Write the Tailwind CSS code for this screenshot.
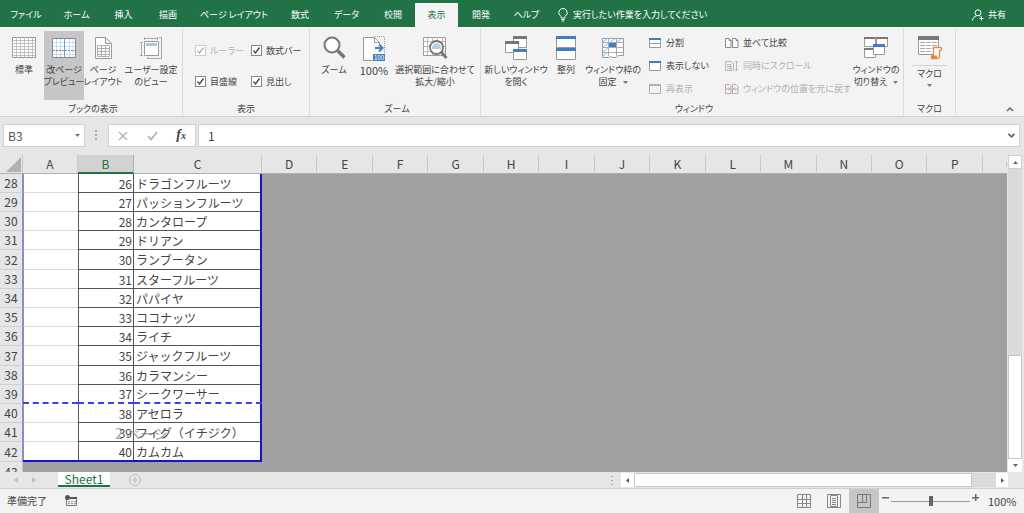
<!DOCTYPE html>
<html lang="ja">
<head>
<meta charset="utf-8">
<title>Sheet1</title>
<script src="https://cdn.jsdelivr.net/npm/@tailwindcss/browser@4"></script>
</head>
<body class="flex h-screen flex-col overflow-hidden bg-[#e6e6e6] font-['Noto_Sans_CJK_JP',sans-serif] text-[10px] leading-3 text-[#444] [font-feature-settings:'palt']">

<!-- Tabs -->
<nav class="flex h-[27px] shrink-0 items-end bg-[#217346] text-[9px] text-white whitespace-nowrap">
  <button class="h-6 w-[52px]">ファイル</button>
  <button class="h-6 w-[49px]">ホーム</button>
  <button class="h-6 w-[45px]">挿入</button>
  <button class="h-6 w-11">描画</button>
  <button class="h-6 w-[88px]">ページ レイアウト</button>
  <button class="h-6 w-11">数式</button>
  <button class="h-6 w-[49px]">データ</button>
  <button class="h-6 w-11">校閲</button>
  <button class="h-6 w-[43px] bg-[#f3f3f3] text-[#217346]">表示</button>
  <button class="h-6 w-[46px]">開発</button>
  <button class="h-6 w-[45px]">ヘルプ</button>
  <button class="ml-2 flex h-6 items-center gap-1">
    <svg width="12" height="14" viewBox="0 0 12 14" fill="none" stroke="#fff"><path d="M4.2 10V8.600C3 7.500 1.800 6.600 1.800 4.700a4.200 4.200 0 0 1 8.400 0C10.200 6.600 9 7.500 7.800 8.600V10zM4.200 11.500h3.600M4.800 13h2.400"/></svg>
    実行したい作業を入力してください</button>
  <button class="mr-[18px] ml-auto flex h-6 items-center gap-1">
    <svg width="12" height="12" viewBox="0 0 12 12" fill="none" stroke="#fff"><circle cx="6" cy="3.800" r="3"/><path d="M.6 11.500C.8 9 2.500 7.300 4.500 6.800M7.500 6.800 8.500 7.500M9.500 7.500v4M7.500 9.500h4"/></svg>
    共有</button>
</nav>

<!-- Ribbon -->
<div class="flex h-[90px] shrink-0 border-b border-[#d2d2d2] bg-[#f3f3f3] pt-[2px] pb-[1px] text-center text-[9px] whitespace-nowrap">
  <section class="flex w-[183px] flex-col border-r border-[#dadada] pt-[2px] pl-1">
    <div class="flex h-[69px] shrink-0">
      <button class="flex w-10 flex-col items-center pt-[5px]">
        <svg class="mb-1" width="24" height="24" viewBox="0 0 24 24"><path fill="#fff" stroke="#999" d="M.5 1.500h23v20H.5z"/><path fill="none" stroke="#b5b5b5" stroke-width=".8" d="M4.500 1v21M8.500 1v21M12.500 1v21M16.500 1v21M20.500 1v21M0 4.500h24M0 7.500h24M0 10.500h24M0 13.500h24M0 16.500h24M0 19.500h24"/></svg>
        標準</button>
      <button class="flex w-10 flex-col items-center bg-[#c6c6c6] pt-[5px]">
        <svg class="mb-1" width="24" height="24" viewBox="0 0 24 24"><path fill="#fff" stroke="#888" d="M.5 2.500h23v19H.5z"/><path fill="none" stroke="#c5ddf3" d="M4.500 3v18M8.500 3v18M17.500 3v18M21 3v18M1 6.500h22M1 10.500h22M1 18.500h22"/><path fill="none" stroke="#6a9fd4" d="M12.500 3v18"/><path fill="none" stroke="#888" stroke-dasharray="2 1" d="M1 14.500h22"/></svg>
        改ページ<br>プレビュー</button>
      <button class="flex w-[38px] flex-col items-center pt-[5px]">
        <svg class="mb-1" width="24" height="24" viewBox="0 0 24 24"><path fill="#fff" stroke="#999" d="M4.500 1.500h10l6 6v15h-16zM14.500 1.500v6h6"/><path fill="none" stroke="#b0b0b0" d="M6.500 9.500h12v11h-12zM10.500 9v12M14.500 9v12M6 12.500h12M6 15.500h12M6 18.500h12"/></svg>
        ページ<br>レイアウト</button>
      <button class="flex w-[58px] flex-col items-center pt-[5px]">
        <svg class="mb-1" width="24" height="24" viewBox="0 0 24 24"><path fill="none" stroke="#aaa" d="M5 2.500h14M5.500 1v3M18.500 1v3M2.500 6v14M1 6.500h3M1 19.500h3M20 1.500h2.500v21h-14V21"/><path fill="#fff" stroke="#999" d="M5.500 5.500h14v14h-14z"/><path fill="#a9c9ea" d="M7 7h11v3H7z"/></svg>
        ユーザー設定<br>のビュー</button>
    </div>
    <h2 class="pt-[3px]">ブックの表示</h2>
  </section>

  <section class="flex w-[127px] flex-col border-r border-[#dadada] pt-[2px]">
    <div class="grid h-[69px] shrink-0 grid-cols-[56px_1fr] grid-rows-[31px_31px] pt-1 pl-3 text-left" id="checks"></div>
    <h2 class="pt-[3px]">表示</h2>
  </section>

  <section class="flex w-[171px] flex-col border-r border-[#dadada] pt-[2px] pl-1">
    <div class="flex h-[69px] shrink-0">
      <button class="flex w-10 flex-col items-center pt-[5px]">
        <svg class="mb-1" width="24" height="24" viewBox="0 0 24 24"><circle cx="10" cy="9" r="7.500" fill="#fff" stroke="#777" stroke-width="2"/><path stroke="#777" stroke-width="3.500" d="m15.500 14.500 7 7"/></svg>
        ズーム</button>
      <button class="flex w-10 flex-col items-center pt-[5px]">
        <svg class="mb-1" width="24" height="26" viewBox="0 0 24 26"><path fill="#fff" d="M2 1h11l5 5v17H2z"/><path fill="none" stroke="#999" d="M10 24.500H1.500V1.500h11l5 5v3M12.500 1.500v5h5"/><path fill="none" stroke="#999" stroke-dasharray="1 1" d="M13 .5h9.500v17"/><path fill="none" stroke="#3f7fbf" stroke-width="2" d="M13 12h7M17 8.500l3.500 3.500-3.500 3.500"/><path fill="#3f7fbf" d="M11 18h12v7H11z"/><text x="17" y="23.800" fill="#fff" font-size="6" text-anchor="middle">100</text></svg>
        <span class="-mt-[2px] text-[11px]">100%</span></button>
      <button class="flex w-[82px] flex-col items-center pt-[5px]">
        <svg class="mb-1" width="26" height="24" viewBox="0 0 26 24"><path fill="#fff" stroke="#999" d="M1.500 1.500h22v18h-22z"/><path fill="none" stroke="#bbb" d="M5.500 1v18M10.500 1v18M15.500 1v18M20.500 1v18M1 5.500h22M1 10.500h22M1 15.500h22"/><circle cx="14.500" cy="11.500" r="6.500" fill="#fff" stroke="#777" stroke-width="1.800"/><path fill="#b5d0ec" d="M10 13a5 5 0 0 1 4.500-6 5 5 0 0 1 4.500 6z"/><path stroke="#777" stroke-width="3" d="m19 16 5.500 6"/></svg>
        選択範囲に合わせて<br>拡大/縮小</button>
    </div>
    <h2 class="pt-[3px]">ズーム</h2>
  </section>

  <section class="flex w-[423px] flex-col border-r border-[#dadada] pt-[2px] pl-1">
    <div class="flex h-[69px] shrink-0">
      <button class="flex w-[62px] flex-col items-center pt-[5px]">
        <svg class="mb-1" width="24" height="24" viewBox="0 0 24 24" fill="#fff" stroke="#999"><path d="M9.500 1.500h13v10h-13z"/><path stroke="none" fill="#777" d="M9 0h14v3H9z"/><path d="M1.500 6.500h13v10h-13z"/><path stroke="none" fill="#777" d="M1 5h14v3H1z"/><path d="M9.500 14.500h13v9h-13z"/><path stroke="none" fill="#3f7fbf" d="M9 13h14v3H9z"/></svg>
        新しいウィンドウ<br>を開く</button>
      <button class="flex w-[38px] flex-col items-center pt-[5px]">
        <svg class="mb-1" width="20" height="24" viewBox="0 0 20 24" fill="#fff" stroke="#999"><path d="M.5 1.500h19v22H.5z"/><path stroke="none" fill="#3f7fbf" d="M0 0h20v3H0zM0 12h20v3H0z"/><path d="M0 11.500h20"/></svg>
        整列</button>
      <button class="flex w-[56px] flex-col items-center pt-[5px]">
        <svg class="mb-1" width="24" height="24" viewBox="0 0 24 24"><path fill="#fff" stroke="#999" d="M1.500 2.500h21v17h-5l-2 2h-4l-2-1-2 1h-6z"/><path fill="none" stroke="#aaa" d="M7.500 2v18M15.500 2v18M1 6.500h22M1 11.500h22M1 16.500h22"/><path fill="none" stroke="#8fbbe6" d="m2 6 5-4M2 11l13-9M2 16l6-5M16 6l6-4M2 20l5-4"/><path fill="#3f7fbf" d="M8 7h7v4H8z"/></svg>
        ウィンドウ枠の<br><span>固定 <svg class="ml-1 inline" width="5" height="3" viewBox="0 0 5 3"><path fill="#777" d="M0 0h5L2.500 3z"/></svg></span></button>
      <div class="ml-2 flex w-[76px] flex-col pt-[1px] text-left">
        <button class="flex h-[23px] items-center gap-[5px]"><svg width="12" height="12" viewBox="0 0 12 12"><path fill="#fff" stroke="#999" d="M.5 1.500h11v9H.5zM0 6.500h12"/><path fill="#3f7fbf" d="M0 1h12v2H0z"/></svg>分割</button>
        <button class="flex h-[23px] items-center gap-[5px]"><svg width="12" height="12" viewBox="0 0 12 12"><path fill="#fff" stroke="#999" d="M.5 1.500h11v9H.5z"/><path fill="#3f7fbf" d="M0 1h12v2H0z"/></svg>表示しない</button>
        <button disabled class="flex h-[23px] items-center gap-[5px] text-[#b1b1b1]"><svg width="12" height="12" viewBox="0 0 12 12"><path fill="#f3f3f3" stroke="#b1b1b1" d="M.5 1.500h11v9H.5z"/><path fill="#b1b1b1" d="M0 1h12v2H0z"/></svg>再表示</button>
      </div>
      <div class="flex w-[126px] flex-col pt-[1px] text-left">
        <button class="flex h-[23px] items-center gap-1"><svg class="shrink-0" width="14" height="12" viewBox="0 0 14 12" fill="#fff" stroke="#888"><path d="M.5 1.500H4l2 2v7H.5zM4 1.500v2h2M7.500 1.500H11l2 2v7H7.500zM11 1.500v2h2"/></svg>並べて比較</button>
        <button disabled class="flex h-[23px] items-center gap-1 text-[#b1b1b1]"><svg class="shrink-0" width="14" height="12" viewBox="0 0 14 12" fill="none" stroke="#c0b5be"><path d="M.5 1.500H6l2.500 2v7h-8zM2 4.500h4M2 6.500h5M2 8.500h5M5.500 4v6M11.500 1v10M10 2.500 11.500 1 13 2.500M10 9.500l1.500 1.500L13 9.500"/></svg>同時にスクロール</button>
        <button disabled class="flex h-[23px] items-center gap-1 text-[#b1b1b1]"><svg class="shrink-0" width="14" height="12" viewBox="0 0 14 12" fill="none" stroke="#bba9b7"><path d="M.5 1.500H4l2 2v7H.5zM7.500 1.500H11l2 2v7H7.500zM1 6h4M3.500 4.500 5 6 3.500 7.500M13 6H8.500M10 4.500 8.500 6 10 7.500"/></svg>ウィンドウの位置を元に戻す</button>
      </div>
      <button class="flex w-[50px] flex-col items-center pt-[5px]">
        <svg class="mb-1" width="24" height="24" viewBox="0 0 24 24" fill="#fff" stroke="#999"><path d="M.5 1.500h11v9H.5zM12.500 1.500h11v9h-11zM.5 12.500h11v9H.5z"/><path stroke="none" fill="#777" d="M0 1h11v2H0zM12 1h12v2H12zM0 12h11v2H0z"/><path d="M9.500 9.500h11v9h-11z"/><path stroke="none" fill="#3f7fbf" d="M9 8h12v3H9z"/></svg>
        ウィンドウの<br><span>切り替え <svg class="ml-1 inline" width="5" height="3" viewBox="0 0 5 3"><path fill="#777" d="M0 0h5L2.500 3z"/></svg></span></button>
    </div>
    <h2 class="pt-[3px]">ウィンドウ</h2>
  </section>

  <section class="flex w-[52px] flex-col border-r border-[#dadada] pt-[2px]">
    <button class="flex h-[69px] shrink-0 flex-col items-center pt-1">
      <svg width="26" height="26" viewBox="0 0 26 26"><path fill="#fff" stroke="#999" d="M1.500 1.500h20v18h-20z"/><path fill="#777" d="M1 1h21v4H1z"/><path stroke="#aaa" stroke-dasharray="5 1" d="M3 7.500h17M3 10.500h17M3 13.500h17M3 16.500h12"/><path fill="#fff" stroke="#e88a3c" stroke-width="1.300" d="M16.500 21v-8.500h7c1.500 0 1.500 3 0 3h-1V21c0 2-1 2.500-2.500 2.500h-5.500V21z"/><path fill="#e88a3c" d="M14 20.500h6v3.500h-6z"/></svg>
      <span class="mt-1 w-[35px] border-t border-[#d2d2d2] pt-[2px]">マクロ</span>
      <svg class="mt-1" width="5" height="3" viewBox="0 0 5 3"><path fill="#777" d="M0 0h5L2.500 3z"/></svg>
    </button>
    <h2 class="pt-[3px]">マクロ</h2>
  </section>
  <button class="mt-auto mr-[10px] mb-[3px] ml-auto" aria-label="リボンを折りたたむ"><svg width="8" height="6" viewBox="0 0 8 6"><path fill="none" stroke="#666" stroke-width="1.500" d="m1 5 3-3 3 3"/></svg></button>
</div>

<!-- Formula bar -->
<div class="flex h-[30px] shrink-0 items-end pr-1 pl-[3px] text-xs leading-4">
  <div class="flex h-[23px] w-[82px] items-center border border-[#d0d0d0] bg-white">
    <input aria-label="名前ボックス" value="B3" class="w-16 pl-1 text-[#555] outline-none">
    <button class="ml-auto pr-[4px]" aria-label="名前の一覧"><svg width="5" height="3" viewBox="0 0 5 3"><path fill="#777" d="M0 0h5L2.500 3z"/></svg></button>
  </div>
  <svg class="mx-[10px] mb-[6px]" width="3" height="11" viewBox="0 0 3 11"><path fill="#aaa" d="M0 0h2v2H0zM0 4h2v2H0zM0 8h2v2H0z"/></svg>
  <div class="flex h-[23px] w-[88px] items-center justify-between border border-[#d0d0d0] bg-white px-[9px]">
    <button aria-label="キャンセル"><svg width="10" height="10" viewBox="0 0 10 10"><path stroke="#b5b5b5" stroke-width="1.500" d="m1 1 8 8M9 1 1 9"/></svg></button>
    <button aria-label="入力"><svg width="11" height="10" viewBox="0 0 11 10"><path fill="none" stroke="#b5b5b5" stroke-width="1.800" d="m1 5 3 3.500L10 1"/></svg></button>
    <button aria-label="関数の挿入" class="font-['Liberation_Serif',serif] text-sm leading-4 font-bold italic">f<span class="text-[10px]">x</span></button>
  </div>
  <div class="ml-[2px] flex h-[23px] flex-1 items-center border border-[#d0d0d0] bg-white">
    <input aria-label="数式バー" value="1" class="min-w-0 flex-1 pl-[9px] text-[#444] outline-none">
    <button class="px-[4px]" aria-label="数式バーの展開"><svg width="7" height="5" viewBox="0 0 7 5"><path fill="none" stroke="#666" stroke-width="1.800" d="m.5 1 3 2.800 3-2.800"/></svg></button>
  </div>
</div>

<!-- Sheet -->
<main class="flex min-h-0 flex-1 pt-2 pr-[2px]">
  <div class="relative min-w-0 flex-1 overflow-hidden bg-[#a0a0a0]">
    <table class="w-full table-fixed border-separate border-spacing-0 text-xs leading-4 [font-feature-settings:normal]">
      <colgroup id="cols"></colgroup>
      <thead><tr id="heads"></tr></thead>
      <tbody id="rows"></tbody>
    </table>
    <div class="pointer-events-none absolute top-[270px] left-[115px] text-sm leading-4 text-[#777]/70">2 ページ</div>
  </div>
  <div class="ml-[1px] flex w-[14px] flex-col bg-[#dadada]">
    <button class="flex h-[14px] items-center justify-center border border-[#d0d0d0] bg-white" aria-label="上へ"><svg width="5" height="3" viewBox="0 0 5 3"><path fill="#666" d="M0 3h5L2.500 0z"/></svg></button>
    <div class="mt-auto h-[104px] border border-[#c6c6c6] bg-white"></div>
    <button class="flex h-[13px] items-center justify-center bg-white" aria-label="下へ"><svg width="5" height="3" viewBox="0 0 5 3"><path fill="#666" d="M0 0h5L2.500 3z"/></svg></button>
  </div>
</main>

<!-- Sheet tabs -->
<div class="flex h-[17px] shrink-0 items-center border-b border-[#d0d0d0] pr-4 pl-[14px]">
  <button class="w-4" aria-label="前のシート"><svg width="4" height="6" viewBox="0 0 4 6"><path fill="#c0c0c0" d="M4 0v6L0 3z"/></svg></button>
  <button class="ml-[2px] w-4" aria-label="次のシート"><svg width="4" height="6" viewBox="0 0 4 6"><path fill="#c0c0c0" d="M0 0v6l4-3z"/></svg></button>
  <button class="ml-[10px] h-[15px] w-[52px] self-start border-b-2 border-[#217346] bg-white text-xs leading-3 text-[#217346]">Sheet1</button>
  <button class="ml-[19px]" aria-label="新しいシート"><svg width="12" height="12" viewBox="0 0 12 12" fill="none" stroke="#bdbdbd"><circle cx="6" cy="6" r="5.500"/><path d="M3 6h6M6 3v6"/></svg></button>
  <svg class="ml-auto" width="2" height="9" viewBox="0 0 2 9"><path fill="#aaa" d="M0 0h2v1H0zM0 4h2v1H0zM0 8h2v1H0z"/></svg>
  <div class="ml-2 flex h-[14px] w-[387px] bg-[#dadada]">
    <button class="flex w-[13px] items-center justify-center bg-white" aria-label="左へ"><svg width="3" height="5" viewBox="0 0 3 5"><path fill="#555" d="M3 0v5L0 2.500z"/></svg></button>
    <div class="w-[338px] border border-[#c6c6c6] bg-white"></div>
    <button class="ml-auto flex w-3 items-center justify-center bg-white" aria-label="右へ"><svg width="3" height="5" viewBox="0 0 3 5"><path fill="#555" d="M0 0v5l3-2.500z"/></svg></button>
  </div>
</div>

<!-- Status bar -->
<footer class="flex h-6 shrink-0 items-center bg-[#f3f3f3] pr-2 pl-[7px]">
  <span>準備完了</span>
  <button class="ml-[18px]" aria-label="マクロの記録"><svg width="12" height="12" viewBox="0 0 12 12"><path fill="#f3f3f3" stroke="#777" d="M1.500 2.500h10v8h-10z"/><path fill="#555" d="M5 2h7v2H5z"/><path stroke="#999" stroke-dasharray="2 1" d="M3 6.500h8M3 8.500h8"/><circle cx="2.500" cy="2.500" r="2.500" fill="#555"/></svg></button>
  <button class="ml-auto flex h-full w-[30px] items-center justify-center" aria-label="標準"><svg width="14" height="14" viewBox="0 0 14 14" fill="none" stroke="#888"><path d="M.5.5h13v13H.5zM5.500 0v14M9.500 0v14M0 5.500h14M0 9.500h14"/></svg></button>
  <button class="flex h-full w-[30px] items-center justify-center" aria-label="ページ レイアウト"><svg width="14" height="14" viewBox="0 0 14 14" fill="none" stroke="#888"><path d="M.5.5h13v13H.5zM3.500 1.500h7v11h-7zM5 4.500h4M5 6.500h4M5 8.500h4M5 10.500h4"/></svg></button>
  <button class="flex h-full w-[30px] items-center justify-center bg-[#c6c6c6]" aria-label="改ページ プレビュー"><svg width="14" height="14" viewBox="0 0 14 14" fill="none" stroke="#777"><path d="M.5.5h13v13H.5zM.5 8.500h9M9.500.5v8M5.500.5v8"/></svg></button>
  <button class="mb-[7px] ml-[3px]" aria-label="縮小"><svg width="7" height="7" viewBox="0 0 7 7"><path fill="#666" d="M0 3h7v1.500H0z"/></svg></button>
  <input type="range" min="0" max="100" value="50" aria-label="ズーム" class="mx-[2px] h-[11px] w-[79px] appearance-none bg-[linear-gradient(#999,#999)] bg-[length:100%_1px] bg-center bg-no-repeat [&::-webkit-slider-thumb]:h-[10px] [&::-webkit-slider-thumb]:w-1 [&::-webkit-slider-thumb]:appearance-none [&::-webkit-slider-thumb]:bg-[#666]">
  <button class="mb-[7px]" aria-label="拡大"><svg width="7" height="7" viewBox="0 0 7 7"><path fill="#666" d="M0 3h7v1.500H0zM3 0h1.500v7H3z"/></svg></button>
  <button class="ml-[9px] w-[28px] text-[11px]">100%</button>
</footer>

<script>
  document.getElementById('checks').innerHTML = [['ルーラー', true], ['数式バー', false], ['目盛線', false], ['見出し', false]].map(([t, off]) => `
    <label class="flex items-center gap-1 ${off ? 'text-[#b1b1b1]' : ''}">
      <span class="grid size-[11px] *:col-start-1 *:row-start-1">
        <input type="checkbox" checked ${off ? 'disabled' : ''} class="size-[11px] appearance-none border border-[#888] bg-white disabled:border-[#ccc]">
        <svg class="pointer-events-none" width="11" height="11" viewBox="0 0 11 11"><path fill="none" stroke="currentColor" stroke-width="1.300" d="m2.500 5.500 2 2.500 4-5.500"/></svg>
      </span>${t}</label>`).join('');

  document.getElementById('cols').innerHTML =
    '<col class="w-[23px]"><col class="w-[55px]"><col class="w-[56px]"><col class="w-[128px]">' + '<col>'.repeat(13) + '<col class="w-6">';

  const head = 'h-[19px] border-b border-[#b0b0b0] p-0 font-normal ';
  document.getElementById('heads').innerHTML =
    `<th class="${head} border-r border-r-[#c8c8c8] bg-[#e6e6e6]"><svg class="mt-[1px] ml-[6px]" width="15" height="15" viewBox="0 0 15 15"><path fill="#b1b1b1" d="M15 0v15H0z"/></svg></th>` +
    [...'ABCDEFGHIJKLMNOP'].map(c => c === 'B'
      ? `<th scope="col" class="h-[19px] border-r border-b-2 border-r-[#b0b0b0] border-b-[#217346] bg-[#d2d2d2] p-0 font-normal text-[#217346]">B</th>`
      : `<th scope="col" class="${head} border-r border-r-[#c8c8c8] bg-[#e6e6e6]">${c}</th>`).join('') +
    `<th scope="col" class="${head} overflow-hidden bg-[#e6e6e6] pl-[23px] text-left">Q</th>`;

  const names = ['ドラゴンフルーツ', 'パッションフルーツ', 'カンタロープ', 'ドリアン', 'ランブータン', 'スターフルーツ', 'パパイヤ', 'ココナッツ', 'ライチ', 'ジャックフルーツ', 'カラマンシー', 'シークワーサー', 'アセロラ', 'フィグ（イチジク）', 'カムカム'];
  // Inset shadows draw the cell edges, so the vertical lines run unbroken from row to row.
  const normal = [
    'shadow-[inset_1px_0_#8c8ccd,inset_0_-1px_#dadada]',
    'shadow-[inset_1px_0_#555,inset_-1px_0_#555,inset_0_-1px_#555]',
    'shadow-[inset_-2px_0_#1414c8,inset_0_-1px_#555]'];
  const pageBreak = [
    'border-b-2 [border-bottom-style:dashed] border-b-[#3c3cf0] shadow-[inset_1px_0_#8c8ccd]',
    'border-b-2 [border-bottom-style:dashed] border-b-[#3c3cf0] shadow-[inset_1px_0_#555,inset_-1px_0_#555]',
    'border-b-2 [border-bottom-style:dashed] border-b-[#3c3cf0] shadow-[inset_-2px_0_#1414c8]'];
  const last = [
    'shadow-[inset_0_-2px_#1414c8,inset_1px_0_#8c8ccd]',
    'shadow-[inset_0_-2px_#1414c8,inset_1px_0_#555,inset_-1px_0_#555]',
    'shadow-[inset_0_-2px_#1414c8,inset_-2px_0_#1414c8]'];
  document.getElementById('rows').innerHTML = names.map((n, i) => {
    const tall = i % 5 === 4 ? 'h-5' : 'h-[19px]';
    const [a, b, c] = i === 11 ? pageBreak : i === 14 ? last : normal;
    return `<tr>
      <th scope="row" class="${tall} border-r border-b border-r-[#8c8ccd] border-b-[#cfcfcf] bg-[#e6e6e6] p-0 font-normal">${i + 28}</th>
      <td class="bg-white p-0 ${a}"></td>
      <td class="bg-white p-0 pr-[2px] text-right ${b}">${i + 26}</td>
      <td class="bg-white p-0 pl-[2px] whitespace-nowrap ${c}">${n}</td>
    </tr>`;
  }).join('') + `<tr><th scope="row" class="h-5 border-r border-r-[#c8c8c8] bg-[#e6e6e6] p-0 font-normal">43</th></tr>`;
</script>
</body>
</html>
